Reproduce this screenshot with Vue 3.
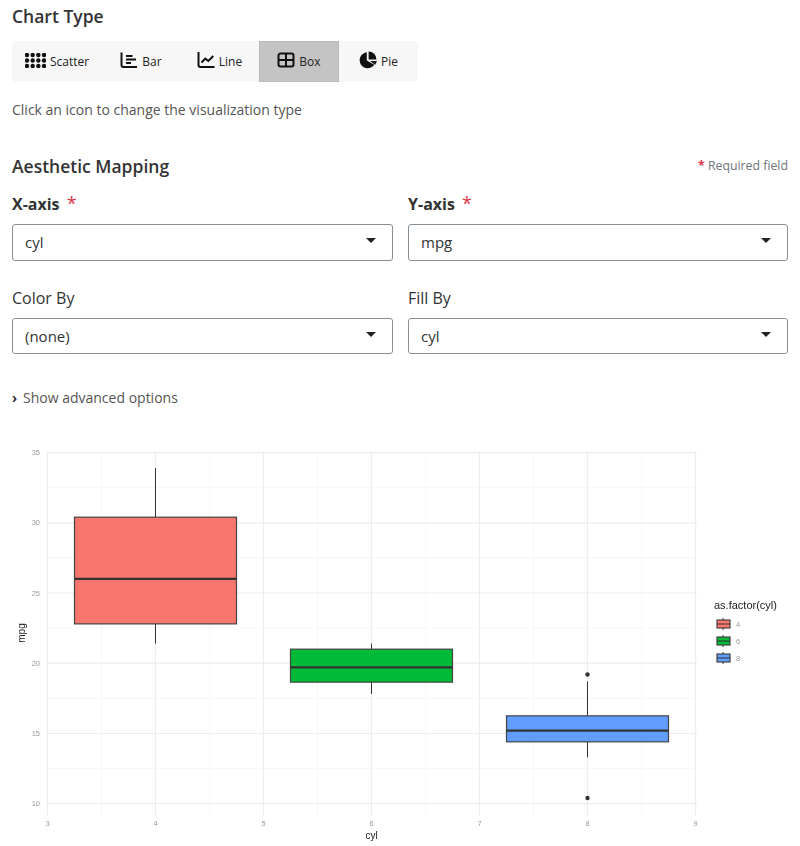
<script setup>
const types = [
  { name: 'Scatter', icon: 'scatter' },
  { name: 'Bar', icon: 'bar' },
  { name: 'Line', icon: 'line' },
  { name: 'Box', icon: 'box' },
  { name: 'Pie', icon: 'pie' }
]

const xOf = v => 47.5 + (v - 3) * 108
const yOf = v => 803.6 - (v - 10) * 14.04

const majorX = [3, 4, 5, 6, 7, 8, 9]
const minorX = [3.5, 4.5, 5.5, 6.5, 7.5, 8.5]
const majorY = [10, 15, 20, 25, 30, 35]
const minorY = [12.5, 17.5, 22.5, 27.5, 32.5]

const boxes = [
  { x: 4, lo: 21.4, q1: 22.8, med: 26, q3: 30.4, hi: 33.9, fill: '#f8766d', out: [] },
  { x: 6, lo: 17.8, q1: 18.65, med: 19.7, q3: 21, hi: 21.4, fill: '#00ba38', out: [] },
  { x: 8, lo: 13.3, q1: 14.4, med: 15.2, q3: 16.25, hi: 18.7, fill: '#619cff', out: [10.4, 19.2] }
]

const legend = [
  { label: '4', fill: '#f8766d' },
  { label: '6', fill: '#00ba38' },
  { label: '8', fill: '#619cff' }
]
</script>

<template>
  <div class="page">
    <h2 class="title">Chart Type</h2>
    <div class="toolbar">
      <div v-for="t in types" :key="t.name" class="type-btn" :class="{ active: t.name === 'Box' }">
        <svg v-if="t.icon === 'scatter'" class="icon scatter" viewBox="0 0 21 15">
          <g v-for="r in 3" :key="r">
            <circle v-for="c in 4" :key="c" :cx="2 + (c - 1) * 5.67" :cy="2 + (r - 1) * 5.5" r="2.2" />
          </g>
        </svg>
        <svg v-else-if="t.icon === 'bar'" class="icon" viewBox="0 0 18 18">
          <path class="stroke" d="M1.500 1.500v12.500a2 2 0 0 0 2 2H17M6 5h6.500M6 8.500h10M6 12h5" />
        </svg>
        <svg v-else-if="t.icon === 'line'" class="icon" viewBox="0 0 18 18">
          <path class="stroke" d="M1.500 1v13a2 2 0 0 0 2 2h14M4.500 11.500l3.800-4 3 2.500 5-5" />
        </svg>
        <svg v-else-if="t.icon === 'box'" class="icon" viewBox="0 0 18 18">
          <path class="stroke" d="M3.500 2.500h11a2 2 0 0 1 2 2v9a2 2 0 0 1-2 2h-11a2 2 0 0 1-2-2v-9a2 2 0 0 1 2-2zM9 2.500v13M1.500 9h15" />
        </svg>
        <svg v-else class="icon" viewBox="0 0 18 18">
          <path d="M7.800 1.300a8 8 0 1 0 7.500 12.400L7.800 9.500z" />
          <path d="M9.600 .5a8 8 0 0 1 7.900 7.900H9.600z" />
          <path d="M11 10h6.800a8 8 0 0 1-1.600 3.700z" />
        </svg>
        <span>{{ t.name }}</span>
      </div>
    </div>
    <p class="hint">Click an icon to change the visualization type</p>

    <div class="section-head">
      <h2 class="title">Aesthetic Mapping</h2>
      <span class="req-note"><b class="star">*</b> Required field</span>
    </div>

    <div class="fields">
      <div class="field">
        <label class="label strong">X-axis <span class="req-star">*</span></label>
        <div class="select tall">cyl</div>
      </div>
      <div class="field">
        <label class="label strong">Y-axis <span class="req-star">*</span></label>
        <div class="select tall">mpg</div>
      </div>
      <div class="field">
        <label class="label">Color By</label>
        <div class="select">(none)</div>
      </div>
      <div class="field">
        <label class="label">Fill By</label>
        <div class="select">cyl</div>
      </div>
    </div>

    <div class="advanced"><span class="chev">›</span>Show advanced options</div>

    <svg class="chart" viewBox="0 0 800 416" width="800" height="416">
      <g transform="translate(0,-430)">
        <line v-for="v in minorY" :key="'my' + v" class="minor" x1="47" x2="697" :y1="yOf(v)" :y2="yOf(v)" />
        <line v-for="v in minorX" :key="'mx' + v" class="minor" y1="451" y2="815" :x1="xOf(v)" :x2="xOf(v)" />
        <line v-for="v in majorY" :key="'gy' + v" class="major" x1="47" x2="697" :y1="yOf(v)" :y2="yOf(v)" />
        <line v-for="v in majorX" :key="'gx' + v" class="major" y1="451" y2="815" :x1="xOf(v)" :x2="xOf(v)" />

        <g v-for="b in boxes" :key="b.x">
          <line class="whisker" :x1="xOf(b.x)" :x2="xOf(b.x)" :y1="yOf(b.hi)" :y2="yOf(b.lo)" />
          <rect class="box" :x="xOf(b.x) - 81" :width="162" :y="yOf(b.q3)" :height="yOf(b.q1) - yOf(b.q3)" :fill="b.fill" />
          <line class="median" :x1="xOf(b.x) - 81" :x2="xOf(b.x) + 81" :y1="yOf(b.med)" :y2="yOf(b.med)" />
          <circle v-for="o in b.out" :key="o" class="outlier" :cx="xOf(b.x)" :cy="yOf(o)" r="2.200" />
        </g>

        <text v-for="v in majorY" :key="'ty' + v" class="tick" x="40" :y="yOf(v) + 2.500" text-anchor="end">{{ v }}</text>
        <text v-for="v in majorX" :key="'tx' + v" class="tick" :x="xOf(v)" y="825.500" text-anchor="middle">{{ v }}</text>
        <text class="axis" x="371.500" y="839" text-anchor="middle">cyl</text>
        <text class="axis" transform="translate(25,633) rotate(-90)" text-anchor="middle">mpg</text>

        <text class="legend-title" x="714" y="609">as.factor(cyl)</text>
        <g v-for="(l, i) in legend" :key="l.label" :transform="`translate(716,${618 + i * 17})`">
          <line class="whisker" x1="7" x2="7" y1="0" y2="12" />
          <rect class="box" x="1" y="2" width="13" height="8" :fill="l.fill" />
          <line class="median thin" x1="1" x2="14" y1="6" y2="6" />
          <text class="tick" x="20" y="8.500">{{ l.label }}</text>
        </g>
      </g>
    </svg>
  </div>
</template>

<style>
html, body {
  margin: 0;
  background: #fff;
}
</style>

<style scoped>
.page {
  box-sizing: border-box;
  width: 800px;
  height: 846px;
  padding: 4px 12px 0;
  overflow: hidden;
  font-family: "Open Sans", sans-serif;
  color: #333;
}

.title {
  margin: 0;
  font-size: 17.500px;
  line-height: 24px;
  font-weight: 600;
  color: #333;
}

.toolbar {
  display: grid;
  grid-template-columns: 90px 78px 79px 80px 79px;
  width: 406px;
  height: 41px;
  margin-top: 13px;
  background: #f7f7f7;
  border-radius: 4px;
  overflow: hidden;
}

.type-btn {
  display: flex;
  align-items: center;
  justify-content: center;
  gap: 4px;
  font-size: 12px;
  font-weight: 500;
  color: #222;
}

.type-btn.active {
  background: #c4c4c4;
  box-shadow: inset 0 0 0 1px #bbb;
}

.icon {
  width: 18px;
  height: 18px;
  fill: #111;
  margin-top: -3px;
}

.icon.scatter {
  width: 21px;
  height: 15px;
}

.stroke {
  fill: none;
  stroke: #111;
  stroke-width: 2;
}

.hint {
  margin: 18px 0 0;
  font-size: 14px;
  line-height: 19px;
  color: #555;
}

.section-head {
  display: flex;
  justify-content: space-between;
  align-items: center;
  margin-top: 35px;
}

.req-note {
  margin-bottom: 2px;
  font-size: 12.300px;
  color: #6c757d;
}

.star {
  color: #dc3545;
  font-weight: 700;
}

.req-star {
  margin-left: 3px;
  font-size: 18px;
  font-weight: 400;
  line-height: 0;
  color: #dc3545;
}

.fields {
  display: grid;
  grid-template-columns: 381px 380px;
  column-gap: 15px;
  row-gap: 26px;
  margin-top: 15px;
}

.label {
  display: block;
  font-size: 16px;
  line-height: 22px;
  color: #333;
  margin-bottom: 9px;
}

.select {
  position: relative;
  box-sizing: border-box;
  height: 36px;
  padding: 0 12px;
  border: 1px solid #868e96;
  border-radius: 3px;
  font-size: 15px;
  line-height: 35px;
  color: #333;
}

.label.strong {
  font-weight: 700;
}

.select.tall {
  height: 37px;
}

.select::after {
  content: "";
  position: absolute;
  right: 16px;
  top: 13px;
  border-left: 5.500px solid transparent;
  border-right: 5.500px solid transparent;
  border-top: 5px solid #222;
}

.advanced {
  margin-top: 34px;
  font-size: 14px;
  line-height: 19px;
  color: #555;
}

.chev {
  display: inline-block;
  width: 11px;
  font-weight: 700;
  color: #333;
}

.chart {
  display: block;
  margin: 23px 0 0 -12px;
  will-change: opacity;
}

.major {
  stroke: #ededed;
  stroke-width: 1.200;
}

.minor {
  stroke: #f5f5f5;
  stroke-width: 0.800;
}

.whisker {
  stroke: #333;
  stroke-width: 1;
}

.box {
  stroke: #444;
  stroke-width: 1.200;
}

.median {
  stroke: #333;
  stroke-width: 2.200;
}

.median.thin {
  stroke-width: 1;
}

.outlier {
  fill: #333;
}

.tick {
  font-family: "Liberation Sans", sans-serif;
  font-size: 7.500px;
  fill: #999;
}

.axis {
  font-family: "Liberation Sans", sans-serif;
  font-size: 10px;
  fill: #222;
}

.legend-title {
  font-family: "Liberation Sans", sans-serif;
  font-size: 11px;
  fill: #222;
}
</style>
